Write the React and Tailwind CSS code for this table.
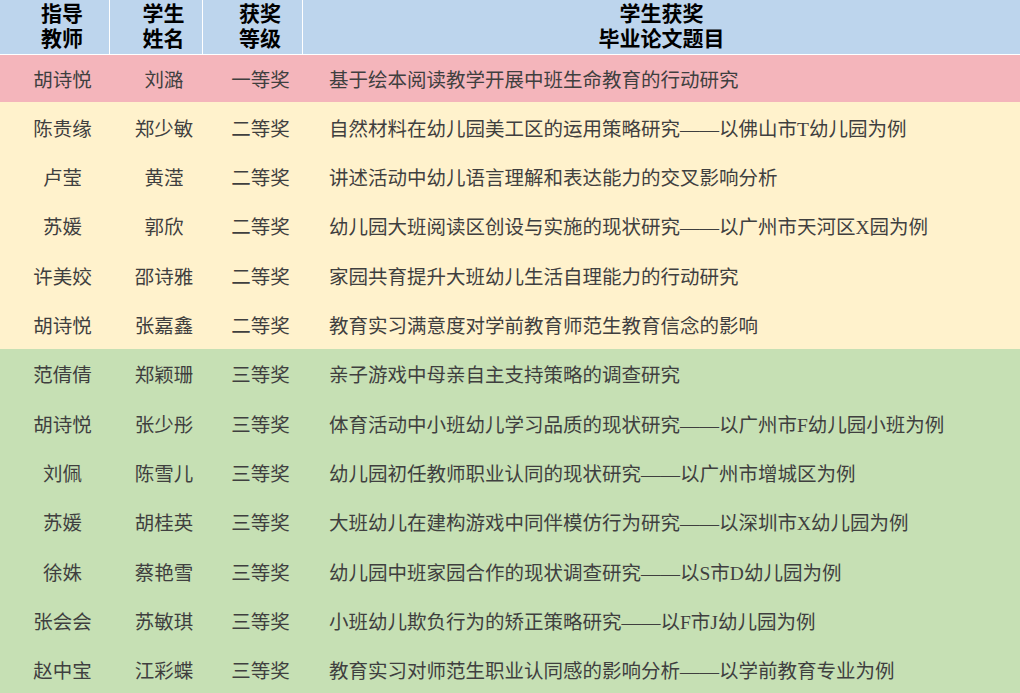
import React from "react";

const rows = [
  ["胡诗悦", "刘潞", "一等奖", "基于绘本阅读教学开展中班生命教育的行动研究", "pink"],
  ["陈贵缘", "郑少敏", "二等奖", "自然材料在幼儿园美工区的运用策略研究——以佛山市T幼儿园为例", "yellow"],
  ["卢莹", "黄滢", "二等奖", "讲述活动中幼儿语言理解和表达能力的交叉影响分析", "yellow"],
  ["苏媛", "郭欣", "二等奖", "幼儿园大班阅读区创设与实施的现状研究——以广州市天河区X园为例", "yellow"],
  ["许美姣", "邵诗雅", "二等奖", "家园共育提升大班幼儿生活自理能力的行动研究", "yellow"],
  ["胡诗悦", "张嘉鑫", "二等奖", "教育实习满意度对学前教育师范生教育信念的影响", "yellow"],
  ["范倩倩", "郑颖珊", "三等奖", "亲子游戏中母亲自主支持策略的调查研究", "green"],
  ["胡诗悦", "张少彤", "三等奖", "体育活动中小班幼儿学习品质的现状研究——以广州市F幼儿园小班为例", "green"],
  ["刘佩", "陈雪儿", "三等奖", "幼儿园初任教师职业认同的现状研究——以广州市增城区为例", "green"],
  ["苏媛", "胡桂英", "三等奖", "大班幼儿在建构游戏中同伴模仿行为研究——以深圳市X幼儿园为例", "green"],
  ["徐姝", "蔡艳雪", "三等奖", "幼儿园中班家园合作的现状调查研究——以S市D幼儿园为例", "green"],
  ["张会会", "苏敏琪", "三等奖", "小班幼儿欺负行为的矫正策略研究——以F市J幼儿园为例", "green"],
  ["赵中宝", "江彩蝶", "三等奖", "教育实习对师范生职业认同感的影响分析——以学前教育专业为例", "green"],
];

const bg = {
  pink: "bg-[#f4b5bb] h-[47px]",
  yellow: "bg-[#fff2cc] h-[49.4px]",
  green: "bg-[#c6e0b4] h-[49.3px]",
};

const font = { fontFamily: '"Liberation Serif", "Noto Sans CJK SC", serif' };

export default function App() {
  return (
    <div className="w-[1020px] h-[693px] overflow-hidden bg-white" style={font}>
      <div className="grid grid-cols-[110px_93px_100px_1fr] h-[55px] bg-[#bdd5ed] border-b border-white text-black font-bold text-[21px] leading-[25px]">
        <div className="flex flex-col items-center justify-center pl-[15px] border-r border-white">
          <span>指导</span>
          <span>教师</span>
        </div>
        <div className="flex flex-col items-center justify-center pl-[15px] border-r border-white">
          <span>学生</span>
          <span>姓名</span>
        </div>
        <div className="flex flex-col items-center justify-center pl-[15px] border-r border-white">
          <span>获奖</span>
          <span>等级</span>
        </div>
        <div className="flex flex-col items-center justify-center">
          <span>学生获奖</span>
          <span>毕业论文题目</span>
        </div>
      </div>
      {rows.map((r, i) => (
        <div
          key={i}
          className={`grid grid-cols-[110px_93px_100px_1fr] items-center pt-[5px] text-[19.5px] text-[#3f3f3f] ${bg[r[4]]}`}
        >
          <div className="text-center pl-[15px] whitespace-nowrap">{r[0]}</div>
          <div className="text-center pl-[15px] whitespace-nowrap">{r[1]}</div>
          <div className="text-center pl-[15px] whitespace-nowrap">{r[2]}</div>
          <div className="pl-[26px] whitespace-nowrap">{r[3]}</div>
        </div>
      ))}
    </div>
  );
}
